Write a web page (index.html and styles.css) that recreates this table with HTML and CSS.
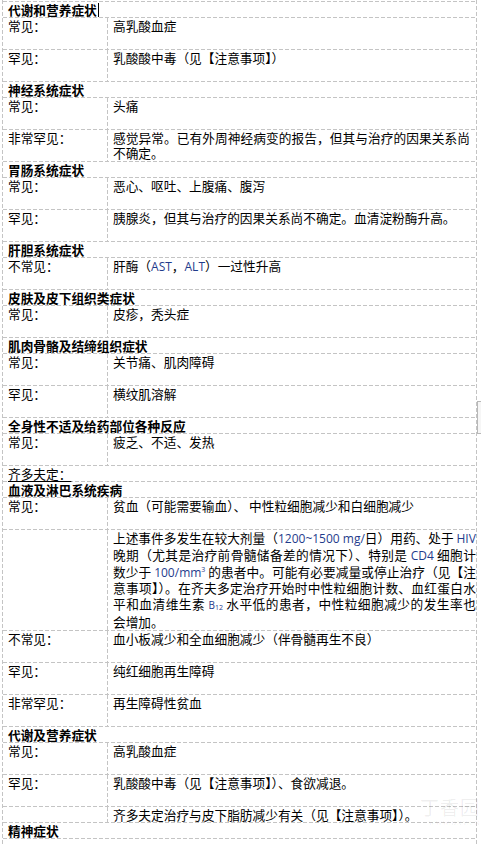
FILE: index.html
```html
<!DOCTYPE html>
<html lang="zh-CN">
<head>
<meta charset="utf-8">
<title>不良反应</title>
<link rel="stylesheet" href="styles.css">
</head>
<body>
<div class="sheet">
  <div class="tbl">
    <div class="hd">代谢和营养症状<span class="caret"></span></div>
    <div class="row"><div class="lab">常见：</div><div class="val">高乳酸血症</div></div>
    <div class="row"><div class="lab">罕见：</div><div class="val">乳酸酸中毒（见【注意事项】）</div></div>
    <div class="hd">神经系统症状</div>
    <div class="row"><div class="lab">常见：</div><div class="val">头痛</div></div>
    <div class="row"><div class="lab">非常罕见：</div><div class="val">感觉异常。已有外周神经病变的报告，但其与治疗的因果关系尚不确定。</div></div>
    <div class="hd">胃肠系统症状</div>
    <div class="row"><div class="lab">常见：</div><div class="val">恶心、呕吐、上腹痛、腹泻</div></div>
    <div class="row"><div class="lab">罕见：</div><div class="val">胰腺炎，但其与治疗的因果关系尚不确定。血清淀粉酶升高。</div></div>
    <div class="hd">肝胆系统症状</div>
    <div class="row"><div class="lab">不常见：</div><div class="val">肝酶（<span class="lat">AST</span>，<span class="lat">ALT</span>）一过性升高</div></div>
    <div class="hd">皮肤及皮下组织类症状</div>
    <div class="row"><div class="lab">常见：</div><div class="val">皮疹，秃头症</div></div>
    <div class="hd">肌肉骨骼及结缔组织症状</div>
    <div class="row"><div class="lab">常见：</div><div class="val">关节痛、肌肉障碍</div></div>
    <div class="row"><div class="lab">罕见：</div><div class="val">横纹肌溶解</div></div>
    <div class="hd">全身性不适及给药部位各种反应</div>
    <div class="row"><div class="lab">常见：</div><div class="val">疲乏、不适、发热</div></div>
  </div>
  <p class="note">齐多夫定：</p>
  <div class="tbl">
    <div class="hd">血液及淋巴系统疾病</div>
    <div class="row"><div class="lab">常见：</div><div class="val">贫血（可能需要输血）、 中性粒细胞减少和白细胞减少</div></div>
    <div class="row"><div class="lab"></div><div class="val dense"><span class="jl">上述事件多发生在较大剂量（<span class="lat">1200~1500 mg/</span>日）用药、处于 <span class="lat">HIV</span></span><span class="jl">晚期（尤其是治疗前骨髓储备差的情况下）、特别是 <span class="lat">CD4</span> 细胞计</span><span class="jl">数少于 <span class="lat">100/mm<sup>3</sup></span> 的患者中。可能有必要减量或停止治疗（见【注</span><span class="jl">意事项】）。在齐夫多定治疗开始时中性粒细胞计数、血红蛋白水</span><span class="jl">平和血清维生素 <span class="lat small">B<sub>12</sub></span> 水平低的患者，中性粒细胞减少的发生率也</span><span class="ll">会增加。</span></div></div>
    <div class="row"><div class="lab">不常见：</div><div class="val">血小板减少和全血细胞减少（伴骨髓再生不良）</div></div>
    <div class="row"><div class="lab">罕见：</div><div class="val">纯红细胞再生障碍</div></div>
    <div class="row"><div class="lab">非常罕见：</div><div class="val">再生障碍性贫血</div></div>
    <div class="hd">代谢及营养症状</div>
    <div class="row"><div class="lab">常见：</div><div class="val">高乳酸血症</div></div>
    <div class="row"><div class="lab">罕见：</div><div class="val">乳酸酸中毒（见【注意事项】）、食欲减退。</div></div>
    <div class="row single"><div class="lab"></div><div class="val">齐多夫定治疗与皮下脂肪减少有关（见【注意事项】）。</div></div>
    <div class="hd">精神症状</div>
  </div>
</div>
<div class="handle"></div>
<div class="wm"><span class="wm-cn">丁香园</span><span class="wm-en">WWW.DXY.CN</span></div>
</body>
</html>
```

FILE: styles.css
```css
html, body {
  margin: 0;
  padding: 0;
  background: #ffffff;
}

body {
  font-family: "Noto Sans CJK SC", "Noto Sans", sans-serif;
  font-size: 12.7px;
  color: #000000;
  position: relative;
  min-height: 846px;
  overflow: hidden;
}

.sheet {
  margin-left: 2px;
  width: 475px;
  box-sizing: border-box;
  padding: 1px 1px 0 1px;
  min-height: 846px;
  background-image:
    linear-gradient(180deg, #c4c4c4 4px, transparent 4px),
    linear-gradient(180deg, #c4c4c4 4px, transparent 4px);
  background-size: 1px 6px, 1px 6px;
  background-position: left top, right top;
  background-repeat: repeat-y, repeat-y;
}

.tbl {
  padding-top: 1px;
  background: linear-gradient(90deg, #c4c4c4 4px, transparent 4px) left top / 6px 1px repeat-x;
}

.hd,
.row {
  padding-bottom: 1px;
  background: linear-gradient(90deg, #c4c4c4 4px, transparent 4px) left bottom / 6px 1px repeat-x;
}

.hd {
  line-height: 15px;
  height: 15px;
  padding-left: 5px;
  font-weight: 700;
  white-space: nowrap;
  position: relative;
}

.caret {
  display: inline-block;
  width: 1px;
  height: 14px;
  background: #000;
  vertical-align: -2px;
  margin-left: 1px;
}

.row {
  display: grid;
  grid-template-columns: 105px 1fr;
  line-height: 15px;
}

.lab {
  min-height: 31px;
  padding-left: 5px;
  background: linear-gradient(180deg, #c4c4c4 4px, transparent 4px) right top / 1px 6px repeat-y;
  white-space: nowrap;
}

.val {
  padding: 0 6px 0 5px;
  text-align: justify;
}

.single .lab {
  min-height: 15px;
}

.dense {
  line-height: 15.8px;
}

.jl {
  display: block;
  white-space: nowrap;
  text-align: justify;
  text-align-last: justify;
}

.ll {
  display: block;
  white-space: nowrap;
}

.lat {
  font-family: "Open Sans", "Liberation Sans", sans-serif;
  font-size: 12px;
  color: #1f3c8c;
}

.lat sup {
  font-size: 7px;
  vertical-align: 5px;
  line-height: 0;
}

.lat sub {
  font-size: 7px;
  vertical-align: -1px;
  line-height: 0;
}

.small {
  font-size: 10px;
}

.note {
  margin: 0;
  height: 15px;
  line-height: 15px;
  padding-left: 5px;
  text-decoration: underline;
  text-underline-offset: 2px;
}

.handle {
  position: absolute;
  left: 477px;
  top: 401px;
  width: 6px;
  height: 31px;
  border: 1px solid #b8b8b8;
  background: #f6f6f6;
}

.wm {
  position: absolute;
  left: 420px;
  top: 795px;
  width: 60px;
  display: flex;
  flex-direction: column;
  align-items: flex-end;
  color: rgba(0, 0, 0, 0.07);
  pointer-events: none;
}

.wm-cn {
  font-size: 19px;
  line-height: 24px;
  letter-spacing: 1px;
}

.wm-en {
  font-family: "Liberation Serif", serif;
  font-size: 7px;
  line-height: 9px;
  letter-spacing: 0.5px;
}
```
